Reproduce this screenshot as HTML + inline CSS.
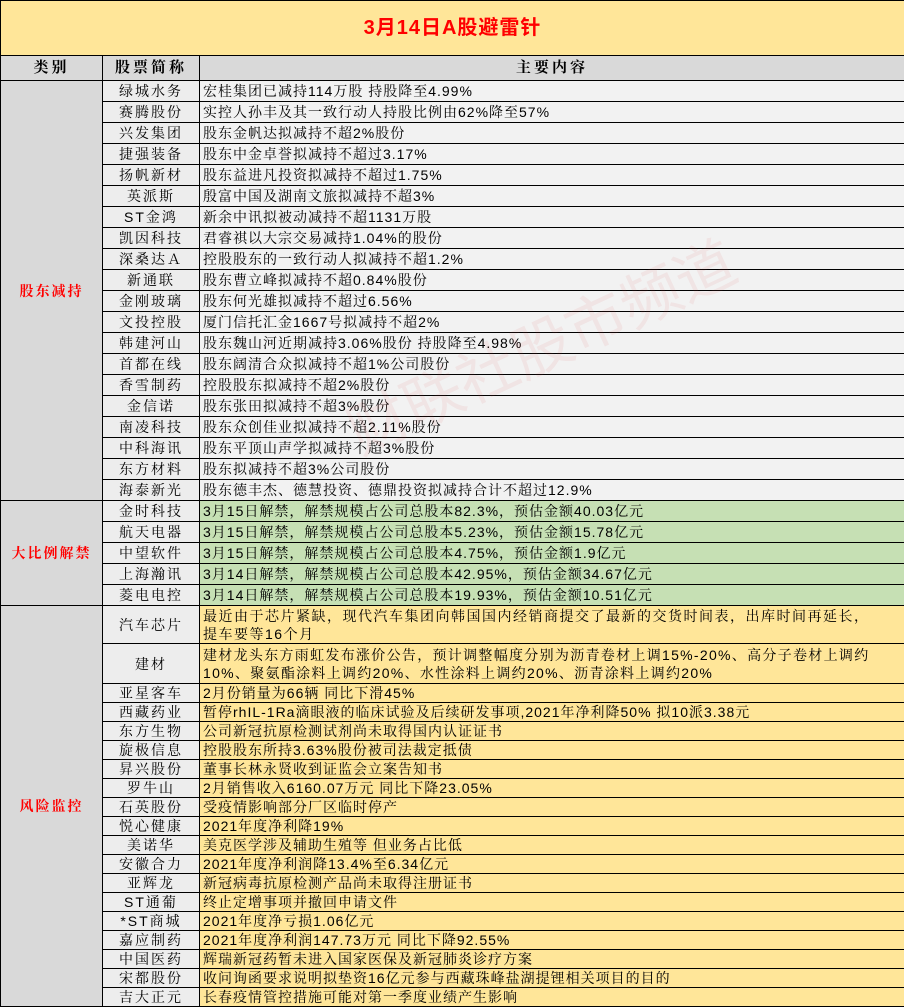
<!DOCTYPE html>
<html><head><meta charset="utf-8"><style>
body{margin:0;width:904px;height:1005px;background:#fff;overflow:hidden;font-family:"Liberation Sans","Noto Serif CJK SC",serif;}
table{border-collapse:collapse;table-layout:fixed;position:absolute;left:0;top:0;width:904px;}
td{border:1px solid #000;padding:0;font-size:14px;line-height:18px;color:#000;overflow:hidden;white-space:nowrap;}
.t{background:#ffe699;height:54px;text-align:center;color:#f00;font-weight:bold;font-size:20px;font-family:"Liberation Sans","Noto Sans CJK SC",sans-serif;letter-spacing:1px;}
.h td{background:#d9d9d9;height:24px;text-align:center;font-weight:bold;font-size:15px;letter-spacing:3px;}
.c{background:#d9d9d9;text-align:center;color:#f00;font-weight:bold;letter-spacing:2px;}
.n{background:#ededed;text-align:center;letter-spacing:2px;}
.a td.x{background:#f2f2f2;}
td.x{padding-left:3px;letter-spacing:1px;}
.g td.x{background:#c6e0b4;}
.y td.x{background:#ffe699;}
tr.a td,tr.g td{height:20px;}
tr.y td{height:18px;}
.wm{position:absolute;left:330px;top:300px;font-size:60px;color:rgba(220,60,60,0.08);transform:rotate(-25deg);font-family:"Noto Sans CJK SC",sans-serif;white-space:nowrap;pointer-events:none;}
</style></head><body>
<table>
<col style="width:102px"><col style="width:97px"><col style="width:705px">
<tr><td class="t" colspan="3">3月14日A股避雷针</td></tr>
<tr class="h"><td>类别</td><td>股票简称</td><td>主要内容</td></tr>
<tr class="a"><td class="c" rowspan="20">股东减持</td><td class="n">绿城水务</td><td class="x">宏桂集团已减持114万股 持股降至4.99%</td></tr>
<tr class="a"><td class="n">赛腾股份</td><td class="x">实控人孙丰及其一致行动人持股比例由62%降至57%</td></tr>
<tr class="a"><td class="n">兴发集团</td><td class="x">股东金帆达拟减持不超2%股份</td></tr>
<tr class="a"><td class="n">捷强装备</td><td class="x">股东中金卓誉拟减持不超过3.17%</td></tr>
<tr class="a"><td class="n">扬帆新材</td><td class="x">股东益进凡投资拟减持不超过1.75%</td></tr>
<tr class="a"><td class="n">英派斯</td><td class="x">殷富中国及湖南文旅拟减持不超3%</td></tr>
<tr class="a"><td class="n">ST金鸿</td><td class="x">新余中讯拟被动减持不超1131万股</td></tr>
<tr class="a"><td class="n">凯因科技</td><td class="x">君睿祺以大宗交易减持1.04%的股份</td></tr>
<tr class="a"><td class="n">深桑达Ａ</td><td class="x">控股股东的一致行动人拟减持不超1.2%</td></tr>
<tr class="a"><td class="n">新通联</td><td class="x">股东曹立峰拟减持不超0.84%股份</td></tr>
<tr class="a"><td class="n">金刚玻璃</td><td class="x">股东何光雄拟减持不超过6.56%</td></tr>
<tr class="a"><td class="n">文投控股</td><td class="x">厦门信托汇金1667号拟减持不超2%</td></tr>
<tr class="a"><td class="n">韩建河山</td><td class="x">股东魏山河近期减持3.06%股份 持股降至4.98%</td></tr>
<tr class="a"><td class="n">首都在线</td><td class="x">股东阔清合众拟减持不超1%公司股份</td></tr>
<tr class="a"><td class="n">香雪制药</td><td class="x">控股股东拟减持不超2%股份</td></tr>
<tr class="a"><td class="n">金信诺</td><td class="x">股东张田拟减持不超3%股份</td></tr>
<tr class="a"><td class="n">南凌科技</td><td class="x">股东众创佳业拟减持不超2.11%股份</td></tr>
<tr class="a"><td class="n">中科海讯</td><td class="x">股东平顶山声学拟减持不超3%股份</td></tr>
<tr class="a"><td class="n">东方材料</td><td class="x">股东拟减持不超3%公司股份</td></tr>
<tr class="a"><td class="n">海泰新光</td><td class="x">股东德丰杰、德慧投资、德鼎投资拟减持合计不超过12.9%</td></tr>
<tr class="g"><td class="c" rowspan="5">大比例解禁</td><td class="n">金时科技</td><td class="x">3月15日解禁，解禁规模占公司总股本82.3%，预估金额40.03亿元</td></tr>
<tr class="g"><td class="n">航天电器</td><td class="x">3月15日解禁，解禁规模占公司总股本5.23%，预估金额15.78亿元</td></tr>
<tr class="g"><td class="n">中望软件</td><td class="x">3月15日解禁，解禁规模占公司总股本4.75%，预估金额1.9亿元</td></tr>
<tr class="g"><td class="n">上海瀚讯</td><td class="x">3月14日解禁，解禁规模占公司总股本42.95%，预估金额34.67亿元</td></tr>
<tr class="g"><td class="n">菱电电控</td><td class="x">3月14日解禁，解禁规模占公司总股本19.93%，预估金额10.51亿元</td></tr>
<tr class="y"><td class="c" rowspan="19">风险监控</td><td class="n" style="height:37px">汽车芯片</td><td class="x" style="letter-spacing:1.5px">最近由于芯片紧缺，现代汽车集团向韩国国内经销商提交了最新的交货时间表，出库时间再延长，<br>提车要等16个月</td></tr>
<tr class="y"><td class="n" style="height:39px">建材</td><td class="x" style="letter-spacing:1.3px">建材龙头东方雨虹发布涨价公告，预计调整幅度分别为沥青卷材上调15%-20%、高分子卷材上调约<br>10%、聚氨酯涂料上调约20%、水性涂料上调约20%、沥青涂料上调约20%</td></tr>
<tr class="y"><td class="n">亚星客车</td><td class="x">2月份销量为66辆 同比下滑45%</td></tr>
<tr class="y"><td class="n">西藏药业</td><td class="x">暂停rhIL-1Ra滴眼液的临床试验及后续研发事项,2021年净利降50% 拟10派3.38元</td></tr>
<tr class="y"><td class="n">东方生物</td><td class="x">公司新冠抗原检测试剂尚未取得国内认证证书</td></tr>
<tr class="y"><td class="n">旋极信息</td><td class="x">控股股东所持3.63%股份被司法裁定抵债</td></tr>
<tr class="y"><td class="n">昇兴股份</td><td class="x">董事长林永贤收到证监会立案告知书</td></tr>
<tr class="y"><td class="n">罗牛山</td><td class="x">2月销售收入6160.07万元 同比下降23.05%</td></tr>
<tr class="y"><td class="n">石英股份</td><td class="x">受疫情影响部分厂区临时停产</td></tr>
<tr class="y"><td class="n">悦心健康</td><td class="x">2021年度净利降19%</td></tr>
<tr class="y"><td class="n">美诺华</td><td class="x">美克医学涉及辅助生殖等 但业务占比低</td></tr>
<tr class="y"><td class="n">安徽合力</td><td class="x">2021年度净利润降13.4%至6.34亿元</td></tr>
<tr class="y"><td class="n">亚辉龙</td><td class="x">新冠病毒抗原检测产品尚未取得注册证书</td></tr>
<tr class="y"><td class="n">ST通葡</td><td class="x">终止定增事项并撤回申请文件</td></tr>
<tr class="y"><td class="n">*ST商城</td><td class="x">2021年度净亏损1.06亿元</td></tr>
<tr class="y"><td class="n">嘉应制药</td><td class="x">2021年度净利润147.73万元 同比下降92.55%</td></tr>
<tr class="y"><td class="n">中国医药</td><td class="x">辉瑞新冠药暂未进入国家医保及新冠肺炎诊疗方案</td></tr>
<tr class="y"><td class="n">宋都股份</td><td class="x">收问询函要求说明拟垫资16亿元参与西藏珠峰盐湖提锂相关项目的目的</td></tr>
<tr class="y"><td class="n">吉大正元</td><td class="x">长春疫情管控措施可能对第一季度业绩产生影响</td></tr>
</table>
<div class="wm">财联社股市频道</div>
</body></html>
